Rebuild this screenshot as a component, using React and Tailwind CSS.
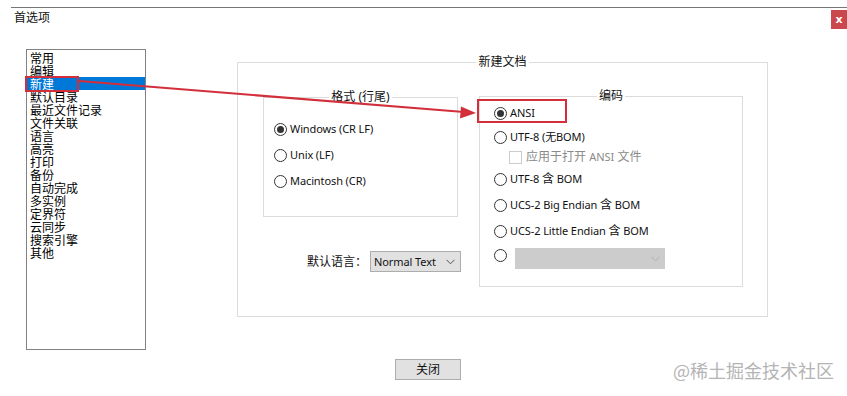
import React from "react";

const items = ["常用","编辑","新建","默认目录","最近文件记录","文件关联","语言","高亮","打印","备份","自动完成","多实例","定界符","云同步","搜索引擎","其他"];

function Radio({ checked }) {
  return (
    <span className="flex h-[13px] w-[13px] shrink-0 items-center justify-center rounded-full border border-[#333333] bg-white">
      {checked && <span className="h-[7px] w-[7px] rounded-full bg-[#333333]" />}
    </span>
  );
}

function Chevron({ color = "#555" }) {
  return (
    <svg width="9" height="6" viewBox="0 0 9 6" className="shrink-0">
      <polyline points="0.5,0.8 4.5,4.8 8.5,0.8" fill="none" stroke={color} strokeWidth="1" />
    </svg>
  );
}

function RadioRow({ checked, label, className = "" }) {
  return (
    <div className={"flex items-center gap-[3px] " + className}>
      <Radio checked={checked} />
      <span className="whitespace-nowrap text-[11px] tracking-[-0.1px]">{label}</span>
    </div>
  );
}

export default function App() {
  return (
    <div className="relative h-[396px] w-[847px] overflow-hidden bg-white text-[12px] leading-[14px] text-[#111] font-['Noto_Sans','Noto_Sans_CJK_SC',sans-serif]">
      <div className="pt-[7px]">
        <div className="ml-[11px] h-px bg-[#777777]" />
        <div className="flex items-start justify-between">
          <span className="ml-[14px] mt-[3px]">首选项</span>
          <div className="mt-[2px] flex h-[19px] w-[16px] items-center justify-center bg-[#c9474d] text-[11px] font-bold leading-none text-white font-['DejaVu_Sans',sans-serif]">x</div>
        </div>

        <div className="flex items-start">
          <div className="ml-[26px] mt-[20px] h-[301px] w-[120px] shrink-0 border border-[#828282] pt-px font-['Noto_Sans_CJK_SC',sans-serif]">
            {items.map((it, i) => (
              <div key={it} className={"h-[13px] pl-[3px] text-[12px] leading-[13px] " + (i === 2 ? "bg-[#0078d7] text-white" : "text-black")}>{it}</div>
            ))}
          </div>

          <fieldset className="ml-[91px] mt-[27px] h-[261px] w-[531px] shrink-0 border border-[#dcdcdc]">
            <legend className="mx-auto px-[2px] leading-[12px]">新建文档</legend>
            <div className="flex items-start">
              <div className="ml-[25px] flex w-[195px] shrink-0 flex-col">
                <fieldset className="mt-[23px] h-[126px] w-[195px] border border-[#dcdcdc]">
                  <legend className="mx-auto px-[2px] leading-[12px]">格式 (行尾)</legend>
                  <div className="flex flex-col pl-[10px] pt-[13px]">
                    <RadioRow className="h-[26px]" checked label="Windows (CR LF)" />
                    <RadioRow className="h-[26px]" label="Unix (LF)" />
                    <RadioRow className="h-[26px]" label="Macintosh (CR)" />
                  </div>
                </fieldset>
                <div className="ml-[44px] mt-[34px] flex items-center gap-[3px] whitespace-nowrap">
                  <span>默认语言：</span>
                  <div className="flex h-[21px] w-[91px] shrink-0 items-center justify-between border border-[#adadad] bg-[#e1e1e1] pl-[3px] pr-[5px]">
                    <span className="text-[11px] tracking-[-0.1px]">Normal Text</span>
                    <Chevron />
                  </div>
                </div>
              </div>

              <fieldset className="ml-[21px] mt-[22px] h-[197px] w-[264px] shrink-0 border border-[#dcdcdc]">
                <legend className="mx-auto px-[2px] leading-[12px]">编码</legend>
                <div className="flex flex-col pl-[14px] pt-px">
                  <RadioRow className="h-[20px]" checked label="ANSI" />
                  <RadioRow className="mt-[4px] h-[20px]" label="UTF-8 (无BOM)" />
                  <div className="flex h-[20px] items-center gap-[4px] pl-[15px] text-[#8a8a8a]">
                    <span className="h-[13px] w-[13px] border border-[#cccccc] bg-white" />
                    <span className="text-[12px]">应用于打开 <span className="text-[11px]">ANSI</span> 文件</span>
                  </div>
                  <RadioRow className="mt-[2px] h-[20px]" label={<>UTF-8 <span className="text-[12px]">含</span> BOM</>} />
                  <RadioRow className="mt-[6px] h-[20px]" label={<>UCS-2 Big Endian <span className="text-[12px]">含</span> BOM</>} />
                  <RadioRow className="mt-[6px] h-[20px]" label={<>UCS-2 Little Endian <span className="text-[12px]">含</span> BOM</>} />
                  <div className="mt-[7px] flex items-start gap-[8px]">
                    <span className="mt-px"><Radio /></span>
                    <div className="flex h-[21px] w-[150px] items-center justify-end border border-[#cccccc] bg-[#cccccc] pr-[4px]">
                      <Chevron color="#b0b0b0" />
                    </div>
                  </div>
                </div>
              </fieldset>
            </div>
          </fieldset>
        </div>

        <div className="ml-[395px] mt-[9px] flex h-[21px] w-[66px] items-center justify-center border border-[#adadad] bg-[#e1e1e1]">关闭</div>
      </div>

      {/* annotations */}
      <div className="absolute left-[25px] top-[76px] h-[16px] w-[54px] border-2 border-[#d22f3b]" />
      <div className="absolute left-[477px] top-[99px] h-[24px] w-[90px] border-2 border-[#d22f3b]" />
      <svg className="absolute left-0 top-0" width="847" height="396" viewBox="0 0 847 396">
        <line x1="79" y1="81" x2="464" y2="112" stroke="#d22f3b" strokeWidth="2.2" />
        <polygon points="476,113 461,106.5 460,118.5" fill="#d22f3b" />
      </svg>

      <div className="absolute left-[673px] top-[360px] text-[18px] leading-[20px] text-[#b4b4b4] font-['Noto_Sans_CJK_SC',sans-serif]">@稀土掘金技术社区</div>
    </div>
  );
}
